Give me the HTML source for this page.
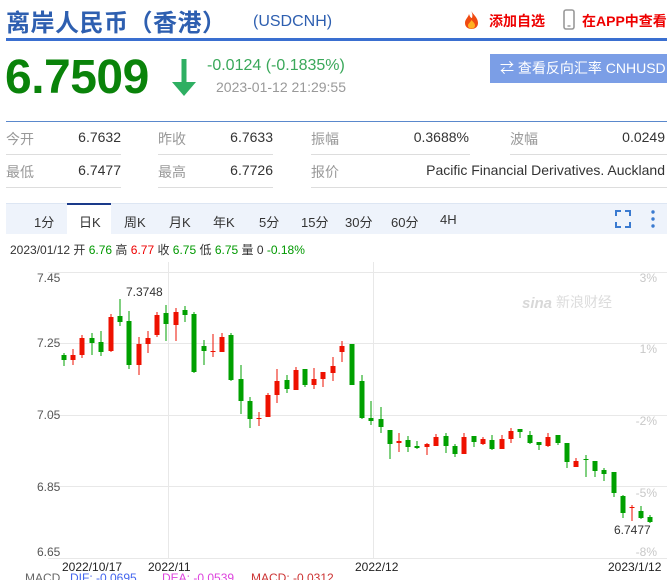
<!DOCTYPE html>
<html><head><meta charset="utf-8"><style>
*{margin:0;padding:0;box-sizing:border-box}
body{width:667px;height:580px;overflow:hidden;background:#fff;font-family:"Liberation Sans","Noto Sans CJK SC",sans-serif;position:relative;color:#333}
.a{position:absolute;white-space:nowrap}
.lb{color:#999;font-size:14px}
.v{color:#333;font-size:14px;text-align:right}
.ul{position:absolute;height:1px;background:#ddd}
.tab{position:absolute;top:212px;font-size:13px;color:#333}
</style></head><body>
<div class="a" style="left:6px;top:3px;font-size:24px;font-weight:bold;color:#2e5fb0;letter-spacing:0.5px">离岸人民币（香港）</div>
<div class="a" style="left:253px;top:13px;font-size:16px;color:#2e5fb0">(USDCNH)</div>
<svg class="a" style="left:463px;top:9px" width="17" height="21" viewBox="0 0 17 21"><path d="M8 1C9 5 15 8 15 14C15 18 12 20 8.5 20C5 20 2 18 2 14C2 10 5 9 6 5C7 8 8 9 9 9C10 6 9 4 8 1Z" fill="#f04a10"/><path d="M8.5 11C10 13 12 14 12 16.5C12 18.5 10.5 19.5 8.5 19.5C6.5 19.5 5 18.5 5 16.5C5 14.5 7 14 8.5 11Z" fill="#ffb020"/></svg>
<div class="a" style="left:489px;top:11px;font-size:14px;color:#e00;font-weight:bold">添加自选</div>
<svg class="a" style="left:563px;top:9px" width="12" height="21" viewBox="0 0 12 21"><rect x="1" y="1" width="10" height="19" rx="2" fill="none" stroke="#999" stroke-width="1.6"/><line x1="4.5" y1="17" x2="7.5" y2="17" stroke="#999" stroke-width="1.4"/></svg>
<div class="a" style="left:582px;top:11px;font-size:14px;color:#e00;font-weight:bold">在APP中查看</div>
<div class="a" style="left:6px;top:38px;width:661px;height:3px;background:#3a6fd0"></div>

<div class="a" style="left:5px;top:50px;font-size:48px;font-weight:bold;color:#0a830a;letter-spacing:-0.5px">6.7509</div>
<svg class="a" style="left:171px;top:59px" width="26" height="38" viewBox="0 0 26 38"><rect x="10.5" y="0" width="5" height="26" fill="#2eaf62"/><path d="M1 23L25 23L13 37Z" fill="#2eaf62"/></svg>
<div class="a" style="left:207px;top:57px;font-size:16px;color:#3aa85a">-0.0124 (-0.1835%)</div>
<div class="a" style="left:216px;top:79px;font-size:14px;color:#999">2023-01-12 21:29:55</div>
<div class="a" style="left:490px;top:54px;width:177px;height:29px;background:#7b9ee6;color:#fff;font-size:14px;line-height:29px;padding-left:10px">⇄ 查看反向汇率 CNHUSD</div>

<div class="a" style="left:6px;top:121px;width:661px;height:1px;background:#5a88cc"></div>
<div class="a lb" style="left:6px;top:129px">今开</div><div class="a v" style="left:60px;width:61px;top:129px">6.7632</div><div class="ul" style="left:6px;width:115px;top:154px"></div>
<div class="a lb" style="left:158px;top:129px">昨收</div><div class="a v" style="left:210px;width:63px;top:129px">6.7633</div><div class="ul" style="left:158px;width:115px;top:154px"></div>
<div class="a lb" style="left:311px;top:129px">振幅</div><div class="a v" style="left:390px;width:79px;top:129px">0.3688%</div><div class="ul" style="left:311px;width:159px;top:154px"></div>
<div class="a lb" style="left:510px;top:129px">波幅</div><div class="a v" style="left:600px;width:65px;top:129px">0.0249</div><div class="ul" style="left:510px;width:157px;top:154px"></div>
<div class="a lb" style="left:6px;top:162px">最低</div><div class="a v" style="left:60px;width:61px;top:162px">6.7477</div><div class="ul" style="left:6px;width:115px;top:187px"></div>
<div class="a lb" style="left:158px;top:162px">最高</div><div class="a v" style="left:210px;width:63px;top:162px">6.7726</div><div class="ul" style="left:158px;width:115px;top:187px"></div>
<div class="a lb" style="left:311px;top:162px">报价</div><div class="a v" style="left:380px;width:285px;top:162px">Pacific Financial Derivatives. Auckland</div><div class="ul" style="left:311px;width:356px;top:187px"></div>

<div class="a" style="left:6px;top:203px;width:661px;height:31px;background:#eef3fb;border-top:1px solid #dde6f3"></div>
<div class="a" style="left:67px;top:203px;width:44px;height:32px;background:#fff;border-top:2px solid #1a3a8a"></div>
<div class="tab" style="left:34px">1分</div><div class="tab" style="left:79px">日K</div><div class="tab" style="left:124px">周K</div><div class="tab" style="left:169px">月K</div><div class="tab" style="left:213px">年K</div><div class="tab" style="left:259px">5分</div><div class="tab" style="left:301px">15分</div><div class="tab" style="left:345px">30分</div><div class="tab" style="left:391px">60分</div><div class="tab" style="left:440px">4H</div>
<svg class="a" style="left:615px;top:210px" width="16" height="18" viewBox="0 0 16 18" fill="none" stroke="#3a7ad0" stroke-width="2"><path d="M1 6V1H6M10 1H15V6M15 12V17H10M6 17H1V12"/></svg>
<svg class="a" style="left:650px;top:209px" width="6" height="20"><circle cx="3" cy="3" r="1.7" fill="#3a7ad0"/><circle cx="3" cy="10" r="1.7" fill="#3a7ad0"/><circle cx="3" cy="17" r="1.7" fill="#3a7ad0"/></svg>

<div class="a" style="left:10px;top:241px;font-size:12px;color:#333">2023/01/12 开 <span style="color:#090">6.76</span> 高 <span style="color:#e00">6.77</span> 收 <span style="color:#090">6.75</span> 低 <span style="color:#090">6.75</span> 量 0 <span style="color:#090">-0.18%</span></div>

<svg class="a" style="left:0;top:0" width="667" height="580" font-family="Liberation Sans, sans-serif">
<g stroke="#e8e8e8" stroke-width="1">
<line x1="48" y1="272.5" x2="667" y2="272.5"/><line x1="48" y1="343.5" x2="667" y2="343.5"/><line x1="48" y1="415.5" x2="667" y2="415.5"/><line x1="48" y1="486.5" x2="667" y2="486.5"/>
<line x1="168.5" y1="262" x2="168.5" y2="558"/><line x1="373.5" y1="262" x2="373.5" y2="558"/>
<line x1="48" y1="558.5" x2="667" y2="558.5"/>
</g>
<g font-size="12" fill="#555">
<text x="37" y="282">7.45</text><text x="37" y="347">7.25</text><text x="37" y="419">7.05</text><text x="37" y="491">6.85</text><text x="37" y="556">6.65</text>
</g>
<g font-size="12" fill="#c8c8c8" text-anchor="end">
<text x="657" y="282">3%</text><text x="657" y="353">1%</text><text x="657" y="425">-2%</text><text x="657" y="497">-5%</text><text x="657" y="556">-8%</text>
</g>
<text x="522" y="308" font-size="15" font-style="italic" font-weight="bold" fill="#d8d8d8">sina</text>
<text x="556" y="307" font-size="14" fill="#dcdcdc" font-family="Noto Sans CJK SC, sans-serif">新浪财经</text>
<text x="126" y="296" font-size="12" fill="#333">7.3748</text>
<text x="614" y="534" font-size="12" fill="#333">6.7477</text>
<g font-size="12" fill="#222">
<text x="62" y="571">2022/10/17</text><text x="148" y="571">2022/11</text><text x="355" y="571">2022/12</text><text x="608" y="571">2023/1/12</text>
</g>
<g font-size="12">
<text x="25" y="582" fill="#666">MACD</text><text x="70" y="582" fill="#4466ee">DIF: -0.0695</text><text x="162" y="582" fill="#dd44dd">DEA: -0.0539</text><text x="251" y="582" fill="#cc3333">MACD: -0.0312</text>
</g>
<g id="c"></g>
</svg>
<script>
var d=[[64,'g',355,360,353,366],[73,'r',355,360,349,365],[82,'r',338,355,335,358],[92,'g',338,343,333,355],[101,'g',342,352,331,356],[111,'r',317,351,314,352],[120,'g',316,322,299,326],[129,'g',321,365,311,369],[139,'r',344,365,337,375],[148,'r',338,344,331,353],[157,'r',315,335,312,337],[166,'g',313,324,305,341],[176,'r',312,325,308,341],[185,'g',310,315,306,322],[194,'g',314,372,312,373],[204,'g',346,351,340,365],[213,'r',351,352,334,357],[222,'r',337,352,333,352],[231,'g',335,380,333,381],[241,'g',379,401,365,414],[250,'g',401,419,397,428],[259,'r',418,419,412,426],[268,'r',395,417,393,417],[277,'r',381,395,369,403],[287,'g',380,389,375,393],[296,'r',370,390,367,390],[305,'g',369,385,369,387],[314,'r',379,385,368,389],[323,'r',372,379,372,387],[333,'r',366,373,357,381],[342,'r',346,352,341,362],[352,'g',344,385,344,385],[362,'g',381,418,375,419],[371,'g',418,421,401,425],[381,'g',419,427,407,433],[390,'g',430,444,430,459],[399,'r',441,443,433,452],[408,'g',440,447,436,452],[417,'g',446,448,441,449],[427,'r',444,447,443,455],[436,'r',437,446,434,446],[446,'g',436,446,433,453],[455,'g',446,454,444,457],[464,'r',437,454,433,454],[474,'g',436,442,436,447],[483,'r',439,444,437,445],[492,'g',440,449,435,450],[502,'r',439,449,435,449],[511,'r',431,439,428,443],[520,'g',429,432,429,438],[530,'g',435,443,431,444],[539,'g',442,445,442,450],[548,'r',437,446,433,447],[558,'g',435,443,435,445],[567,'g',443,462,443,468],[576,'r',461,467,458,467],[586,'g',459,460,455,477],[595,'g',461,471,461,477],[604,'g',470,474,468,481],[614,'g',472,493,472,497],[623,'g',496,513,495,518],[632,'r',507,508,505,521],[641,'g',511,518,506,519],[650,'g',517,522,515,523]];
var s='';d.forEach(function(c){var col=c[1]=='g'?'#00a000':'#ee1100';s+='<rect x="'+(c[0]-0.5)+'" y="'+c[4]+'" width="1" height="'+(c[5]-c[4])+'" fill="'+col+'"/><rect x="'+(c[0]-2.5)+'" y="'+c[2]+'" width="5" height="'+Math.max(1,c[3]-c[2])+'" fill="'+col+'"/>';});
document.getElementById('c').innerHTML=s;
</script>
</body></html>
